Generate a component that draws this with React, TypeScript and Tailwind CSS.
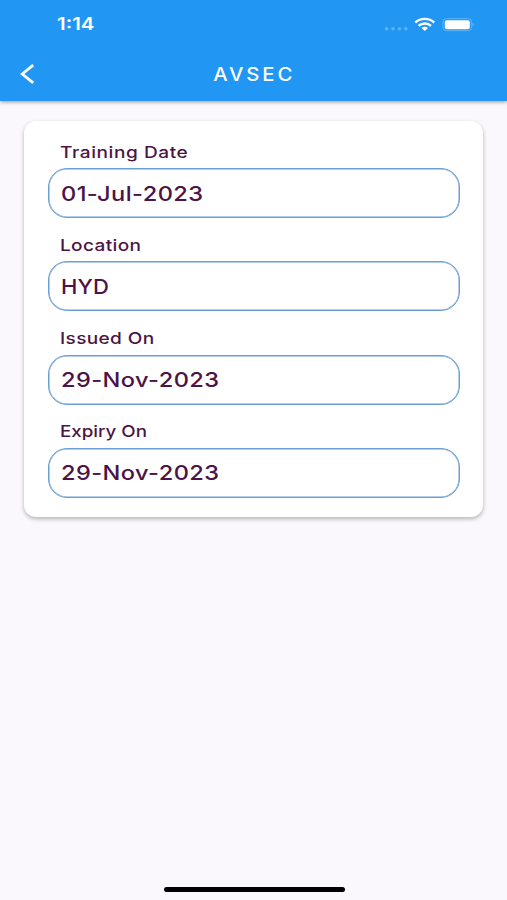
const fields = [
  { label: 'Training Date', value: '01-Jul-2023', labelScale: 'scale-x-[1.19] tracking-[0.48px]', valueScale: 'scale-x-[1.18] tracking-[0.35px]' },
  { label: 'Location', value: 'HYD', labelScale: 'scale-x-[1.19] tracking-[0.3px]', valueScale: 'scale-x-[1.1] tracking-[0.1px]' },
  { label: 'Issued On', value: '29-Nov-2023', labelScale: 'scale-x-[1.19] tracking-[0.3px]', valueScale: 'scale-x-[1.18] tracking-[0.35px]' },
  { label: 'Expiry On', value: '29-Nov-2023', labelScale: 'scale-x-[1.17]', valueScale: 'scale-x-[1.18] tracking-[0.35px]' },
];

function StatusBar() {
  return (
    <div className="flex h-12 items-center justify-between pr-[33px] pl-[57px]">
      <span className="inline-block origin-left scale-x-[1.2] pt-px text-[17px] leading-none font-semibold">1:14</span>
      <svg width="90" height="16" viewBox="0 0 90 16" fill="none">
        <g fill="#fff" fillOpacity="0.28">
          <circle cx="2.6" cy="12.8" r="1.8" />
          <circle cx="9" cy="12.8" r="1.8" />
          <circle cx="15.4" cy="12.8" r="1.8" />
          <circle cx="21.8" cy="12.8" r="1.8" />
        </g>
        <g stroke="#fff" strokeWidth="2.4">
          <path d="M31.3 6.5C36.6 1.7 45 1.7 50.3 6.5" />
          <path d="M34.6 9.8C38 6.8 43.6 6.8 47 9.8" />
        </g>
        <path d="M37.5 12c1.7-1.6 4.9-1.6 6.6 0l-3.3 3.1z" fill="#fff" />
        <rect x="59" y="2.7" width="28.6" height="12" rx="3.3" stroke="#fff" strokeOpacity="0.28" />
        <rect x="60.8" y="4.2" width="25" height="9" rx="2" fill="#fff" />
        <path d="M88.7 6.8v4c1.2-.7 1.2-3.3 0-4z" fill="#fff" fillOpacity="0.45" />
      </svg>
    </div>
  );
}

export default function App() {
  return (
    <div className="flex h-[900px] w-[507px] flex-col overflow-hidden bg-[#faf8fc] font-['Inter',sans-serif]">
      <header className="h-[101px] shrink-0 bg-[#2196f3] text-white shadow-[0_1px_4px_rgba(0,0,0,0.4)]">
        <StatusBar />
        <div className="grid h-[52px] grid-cols-[54px_1fr_54px] items-center">
          <button aria-label="Back" className="pl-5">
            <svg width="15" height="20" viewBox="0 0 15 20" fill="none" stroke="#fff" strokeWidth="2.8">
              <path d="M13.2 1.2 2.2 10l11 8.8" />
            </svg>
          </button>
          <h1 className="pt-0.5 pl-0.5 text-center text-[18px] leading-none font-medium">
            <span className="inline-block scale-x-[1.13] tracking-[2.5px]">AVSEC</span>
          </h1>
        </div>
      </header>
      <main className="mx-6 mt-5 flex h-[396px] shrink-0 flex-col rounded-xl bg-white pt-[18px] pr-[23px] pl-6 text-[#4c1446] shadow-[0_2px_4px_rgba(0,0,0,0.28)]">
        {fields.map((f) => (
          <section key={f.label} className="h-[93.3px] shrink-0">
            <div className="flex h-[29px] items-center pb-1 pl-3 text-[16px] leading-none font-medium">
              <span className={`inline-block origin-left ${f.labelScale}`}>{f.label}</span>
            </div>
            <div className="flex h-[50px] items-center rounded-[19px] border border-[#6a9fd4] pt-px pl-3 text-[20px] leading-none font-medium shadow-[inset_0_0_0_0.5px_#6a9fd4]">
              <span className={`inline-block origin-left ${f.valueScale}`}>{f.value}</span>
            </div>
          </section>
        ))}
      </main>
      <div className="mt-auto mb-[8px] ml-[164px] h-[5px] w-[181px] rounded-full bg-black" />
    </div>
  );
}
